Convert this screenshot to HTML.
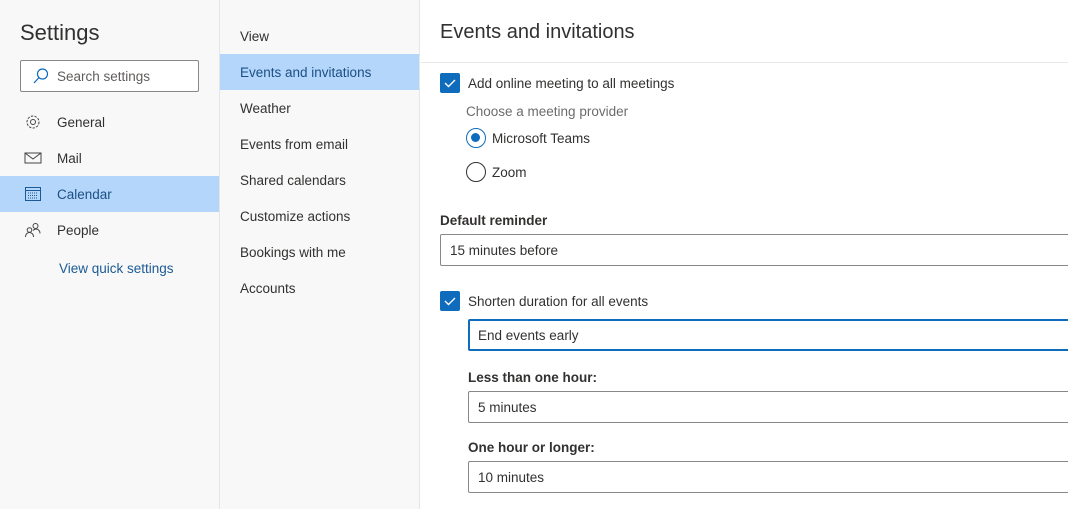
<!DOCTYPE html>
<html><head><style>
*{margin:0;padding:0;box-sizing:border-box}
body{width:1068px;height:509px;overflow:hidden;background:#fff;font-family:"Liberation Sans",sans-serif;color:#323130;position:relative;font-size:13.5px}
.a{position:absolute;white-space:nowrap}
.t{margin-top:1px}
#l{position:absolute;left:0;top:0;width:220px;height:509px;background:#f8f8f8;border-right:1px solid #e6e6e6}
#m{position:absolute;left:220px;top:0;width:200px;height:509px;background:#f8f8f8;border-right:1px solid #e6e6e6}
.sel{background:#b4d6fa}
.cb{position:absolute;width:20px;height:20px;background:#0f6cbd;border-radius:2px}
.box{position:absolute;border:1px solid #8a8886;border-radius:2px;height:32px;padding-left:9px;line-height:31px;right:-5px}
</style></head><body>
<div id="l">
<div class="a" style="left:20px;top:20px;font-size:22px;color:#323130">Settings</div>
<div class="a" style="left:20px;top:60px;width:179px;height:32px;border:1px solid #8a8886;border-radius:2px;background:#fff"></div>
<svg class="a" style="left:32px;top:67px" width="18" height="18" viewBox="0 0 18 18"><circle cx="10.5" cy="7" r="5" fill="none" stroke="#0f6cbd" stroke-width="1.2"/><path d="M7 10.5 2 16" stroke="#0f6cbd" stroke-width="1.3"/></svg>
<div class="a" style="left:57px;top:69px;color:#605e5c">Search settings</div>
<svg class="a" style="left:24px;top:113px" width="18" height="18" viewBox="0 0 18 18"><circle cx="9" cy="9" r="2.5" fill="none" stroke="#444" stroke-width="1"/><circle cx="9" cy="9" r="6" fill="none" stroke="#444" stroke-width="1" stroke-dasharray="2.4 1.3"/></svg>
<div class="a" style="left:57px;top:115px">General</div>
<svg class="a" style="left:24px;top:151px" width="18" height="14" viewBox="0 0 18 14"><rect x="1" y="2" width="16" height="10" fill="none" stroke="#444"/><path d="M1 2l8 6 8-6" fill="none" stroke="#444"/></svg>
<div class="a" style="left:57px;top:151px">Mail</div>
<div class="a sel" style="left:0;top:176px;width:219px;height:36px"></div>
<svg class="a" style="left:24px;top:185px" width="18" height="18" viewBox="0 0 18 18"><rect x="1.5" y="2.5" width="15" height="13" fill="none" stroke="#1b5a96"/><path d="M1.5 5.5h15" stroke="#1b5a96"/><path d="M4 8h10M4 10.5h10M4 13h10" stroke="#1b5a96" stroke-dasharray="1 1"/></svg>
<div class="a" style="left:57px;top:187px;color:#1b4f85">Calendar</div>
<svg class="a" style="left:24px;top:221px" width="18" height="18" viewBox="0 0 18 18"><circle cx="11.5" cy="5" r="2.5" fill="none" stroke="#444"/><circle cx="5.5" cy="9" r="2.3" fill="none" stroke="#444"/><path d="M1.5 16c0-3 2-4.5 4-4.5s4 1.5 4 4.5M9 9.5c1-1 2-1.5 3-1.5 2 0 4 1.5 4 4.5" fill="none" stroke="#444"/></svg>
<div class="a" style="left:57px;top:223px">People</div>
<div class="a" style="left:59px;top:261px;color:#1b5a96">View quick settings</div>
</div>
<div id="m">
<div class="a" style="left:20px;top:29px">View</div>
<div class="a sel" style="left:0;top:54px;width:199px;height:36px"></div>
<div class="a" style="left:20px;top:65px;color:#1b4f85">Events and invitations</div>
<div class="a" style="left:20px;top:101px">Weather</div>
<div class="a" style="left:20px;top:137px">Events from email</div>
<div class="a" style="left:20px;top:173px">Shared calendars</div>
<div class="a" style="left:20px;top:209px">Customize actions</div>
<div class="a" style="left:20px;top:245px">Bookings with me</div>
<div class="a" style="left:20px;top:281px">Accounts</div>
</div>
<div class="a" style="left:440px;top:21px;font-size:20px">Events and invitations</div>
<div class="a" style="left:421px;top:62px;width:647px;height:1px;background:#e8e8e8"></div>
<div class="cb" style="left:440px;top:73px"><svg width="20" height="20"><path d="M5 10l3.5 3.5L15 7" fill="none" stroke="#fff" stroke-width="1.4"/></svg></div>
<div class="a" style="left:468px;top:76px">Add online meeting to all meetings</div>
<div class="a" style="left:466px;top:104px;color:#6e6c6a">Choose a meeting provider</div>
<div class="a" style="left:466px;top:128px;width:20px;height:20px;border:1.5px solid #0f6cbd;border-radius:50%"><div style="position:absolute;left:4px;top:4px;width:9px;height:9px;border-radius:50%;background:#0f6cbd"></div></div>
<div class="a" style="left:492px;top:131px">Microsoft Teams</div>
<div class="a" style="left:466px;top:162px;width:20px;height:20px;border:1px solid #323130;border-radius:50%"></div>
<div class="a" style="left:492px;top:165px">Zoom</div>
<div class="a" style="left:440px;top:213px;font-weight:bold">Default reminder</div>
<div class="box" style="left:440px;top:234px">15 minutes before</div>
<div class="cb" style="left:440px;top:291px"><svg width="20" height="20"><path d="M5 10l3.5 3.5L15 7" fill="none" stroke="#fff" stroke-width="1.4"/></svg></div>
<div class="a" style="left:468px;top:294px">Shorten duration for all events</div>
<div class="box" style="left:468px;top:319px;border:2px solid #0f6cbd;padding-left:8px;line-height:29px">End events early</div>
<div class="a" style="left:468px;top:370px;font-weight:bold">Less than one hour:</div>
<div class="box" style="left:468px;top:391px">5 minutes</div>
<div class="a" style="left:468px;top:440px;font-weight:bold">One hour or longer:</div>
<div class="box" style="left:468px;top:461px">10 minutes</div>
</body></html>
